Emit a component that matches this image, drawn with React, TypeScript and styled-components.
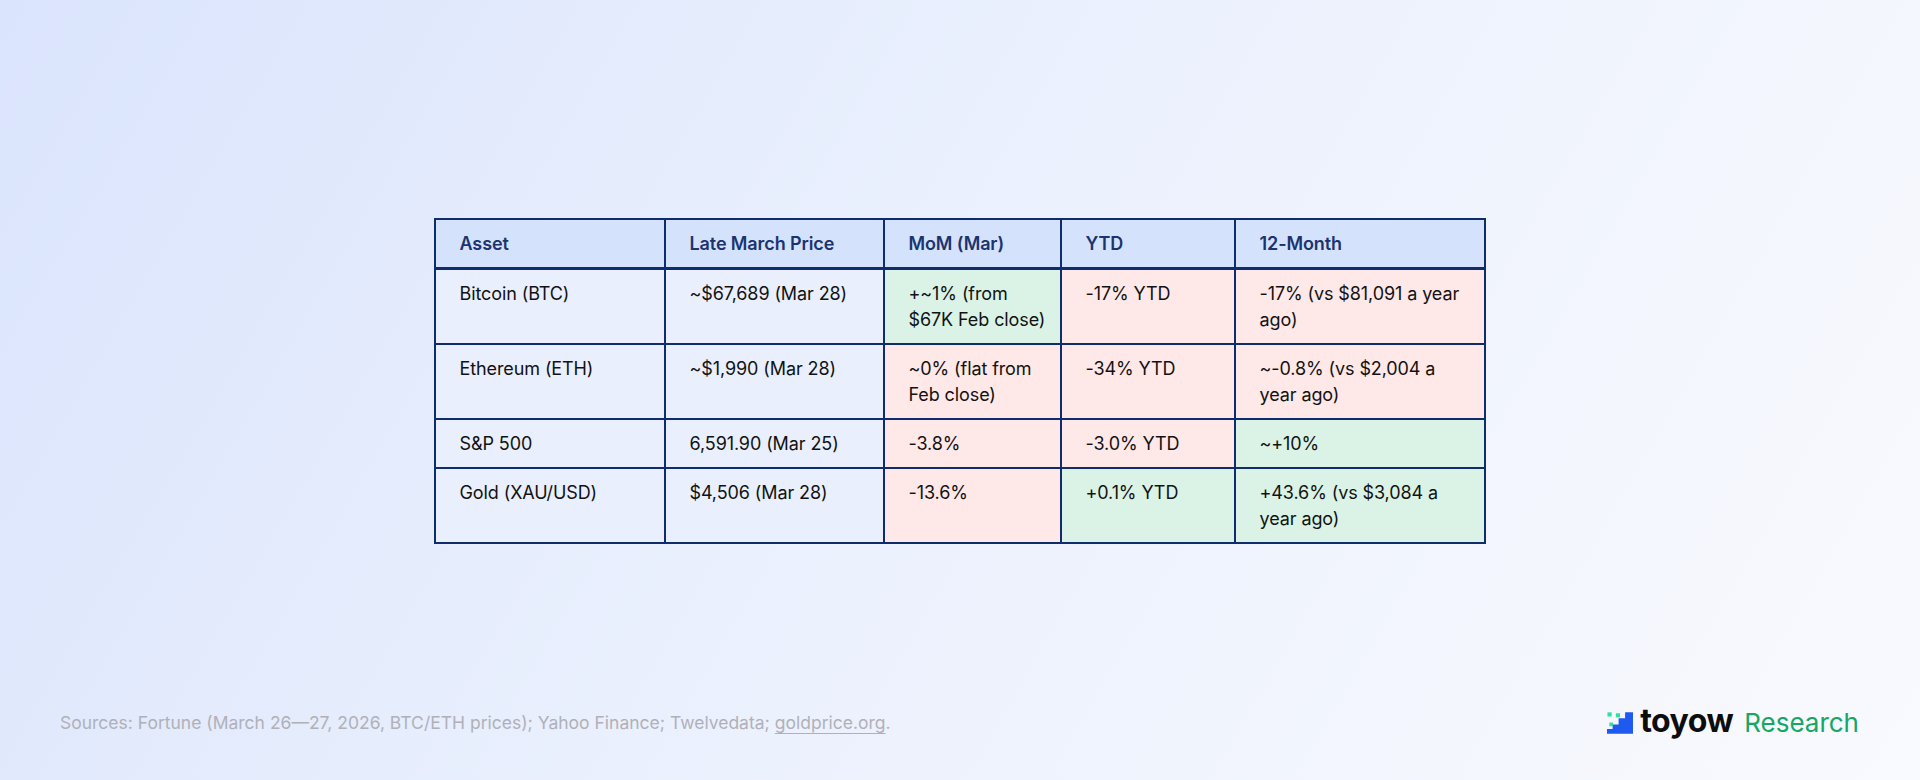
import styled, { createGlobalStyle } from "styled-components";

type Tone = "plain" | "up" | "down";

type Row = {
  asset: string;
  price: string;
  cells: { text: string; tone: Tone }[];
};

const rows: Row[] = [
  {
    asset: "Bitcoin (BTC)",
    price: "~$67,689 (Mar 28)",
    cells: [
      { text: "+~1% (from $67K Feb close)", tone: "up" },
      { text: "-17% YTD", tone: "down" },
      { text: "-17% (vs $81,091 a year ago)", tone: "down" },
    ],
  },
  {
    asset: "Ethereum (ETH)",
    price: "~$1,990 (Mar 28)",
    cells: [
      { text: "~0% (flat from Feb close)", tone: "down" },
      { text: "-34% YTD", tone: "down" },
      { text: "~-0.8% (vs $2,004 a year ago)", tone: "down" },
    ],
  },
  {
    asset: "S&P 500",
    price: "6,591.90 (Mar 25)",
    cells: [
      { text: "-3.8%", tone: "down" },
      { text: "-3.0% YTD", tone: "down" },
      { text: "~+10%", tone: "up" },
    ],
  },
  {
    asset: "Gold (XAU/USD)",
    price: "$4,506 (Mar 28)",
    cells: [
      { text: "-13.6%", tone: "down" },
      { text: "+0.1% YTD", tone: "up" },
      { text: "+43.6% (vs $3,084 a year ago)", tone: "up" },
    ],
  },
];

const headers = ["Asset", "Late March Price", "MoM (Mar)", "YTD", "12-Month"];
const widths = [230, 219, 177, 174, 250];

const toneBg: Record<Tone, string> = {
  plain: "#e9effd",
  up: "#daf3e6",
  down: "#fee8e8",
};

// 로고 아이콘 (계단 + 픽셀)
const LogoMark = () => (
  <svg width="26" height="22" viewBox="0 0 28 23">
    <path d="M19.5 0H28V23H0V18H6V13H12.5V6.5H19.5Z" fill="#1f5af0" />
    <rect x="0.5" y="0" width="4.5" height="4.5" fill="#2fe0a0" />
    <rect x="9.5" y="1" width="4.5" height="4.5" fill="#2fe0a0" />
    <rect x="2.5" y="11" width="4" height="4" fill="#2fe0a0" />
  </svg>
);

const App = () => {
  return (
    <>
      <GlobalStyle />
      <Page>
        <Main>
          <Table>
            <colgroup>
              {widths.map((w, i) => (
                <col key={i} style={{ width: w }} />
              ))}
            </colgroup>
            <thead>
              <tr>
                {headers.map((h) => (
                  <HeadCell key={h}>{h}</HeadCell>
                ))}
              </tr>
            </thead>
            <tbody>
              {rows.map((r) => (
                <tr key={r.asset}>
                  <Cell $tone="plain">{r.asset}</Cell>
                  <Cell $tone="plain">{r.price}</Cell>
                  {r.cells.map((c, i) => (
                    <Cell key={i} $tone={c.tone}>
                      {c.text}
                    </Cell>
                  ))}
                </tr>
              ))}
            </tbody>
          </Table>
        </Main>
        <Footer>
          <Sources>
            Sources: Fortune (March 26—27, 2026, BTC/ETH prices); Yahoo Finance;
            Twelvedata; <SourceLink>goldprice.org</SourceLink>.
          </Sources>
          <Brand>
            <LogoMark />
            <BrandName>toyow</BrandName>
            <BrandSub>Research</BrandSub>
          </Brand>
        </Footer>
      </Page>
    </>
  );
};

export default App;

const GlobalStyle = createGlobalStyle`
  html, body {
    margin: 0;
    padding: 0;
  }
  body {
    font-family: Inter, "Noto Sans", sans-serif;
  }
`;

const Page = styled.div`
  width: 1920px;
  height: 780px;
  box-sizing: border-box;
  display: flex;
  flex-direction: column;
  background: linear-gradient(120deg, #dae4fc 0%, #eaf0fd 45%, #f9fafe 100%);
  padding: 0 61px 40px 60px;
  overflow: hidden;
`;

const Main = styled.div`
  display: flex;
  justify-content: center;
  padding-top: 218px;
  flex-grow: 1;
`;

const Table = styled.table`
  width: 1050px;
  height: fit-content;
  table-layout: fixed;
  border-collapse: collapse;
  border: 2px solid #0f2c6c;
  font-size: 18px;
  line-height: 26px;
  letter-spacing: -0.1px;
`;

const HeadCell = styled.th`
  background: #d5e2fc;
  color: #1b3470;
  font-weight: 600;
  text-align: left;
  padding: 11px 12px 10px 24px;
  border: 2px solid #0f2c6c;
  border-bottom-width: 3px;
`;

const Cell = styled.td<{ $tone: Tone }>`
  background: ${(p) => toneBg[p.$tone]};
  color: #121212;
  vertical-align: top;
  padding: 11px 12px 10px 24px;
  border: 2px solid #0f2c6c;
`;

const Footer = styled.div`
  display: flex;
  align-items: center;
  justify-content: space-between;
`;

const Sources = styled.div`
  font-size: 17.5px;
  color: #b0b1b8;
`;

const SourceLink = styled.span`
  text-decoration: underline;
  text-underline-offset: 4px;
`;

const Brand = styled.div`
  display: flex;
  align-items: center;
  gap: 7px;
`;

const BrandName = styled.span`
  font-size: 32px;
  font-weight: 700;
  color: #0d0d0d;
  letter-spacing: -0.5px;
  margin-right: 4px;
  line-height: 1;
  padding-bottom: 3px;
`;

const BrandSub = styled.span`
  font-size: 26px;
  font-weight: 400;
  color: #16a765;
`;
